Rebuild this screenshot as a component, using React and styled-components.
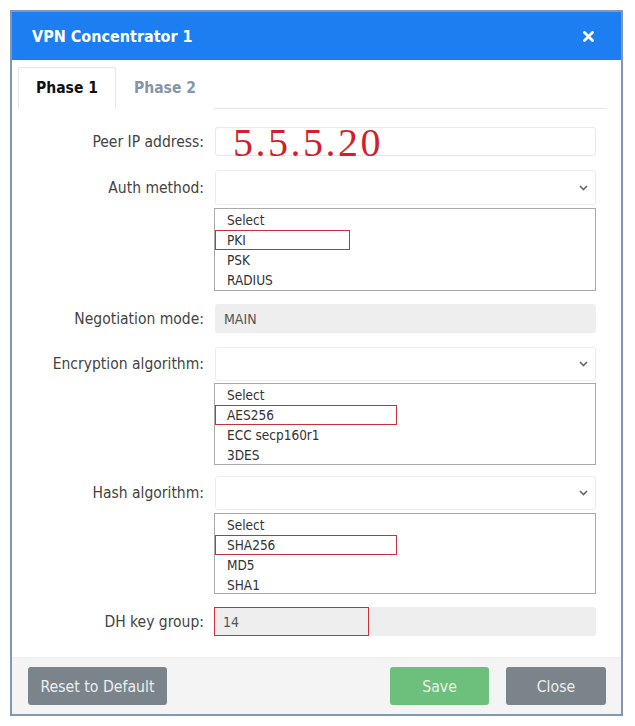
import React from 'react';
import styled, { createGlobalStyle } from 'styled-components';

const GlobalStyle = createGlobalStyle`
  html, body {
    margin: 0;
    padding: 0;
    background: #ffffff;
  }
  body {
    font-family: 'DejaVu Sans Condensed', 'DejaVu Sans', sans-serif;
    font-stretch: condensed;
  }
`;

const Page = styled.div`
  padding: 10px 0 0 10px;
`;

const Dialog = styled.div`
  width: 609px;
  border: 2px solid #7f99b5;
  background: #ffffff;
  display: flex;
  flex-direction: column;
`;

const Header = styled.div`
  height: 48px;
  background: #1c7ef0;
  display: flex;
  align-items: center;
  justify-content: space-between;
  padding: 0 27px 0 20px;
  color: #ffffff;
  font-size: 16px;
  font-weight: bold;
`;

const CloseIcon = () => (
  <svg width='11' height='11' viewBox='0 0 11 11'>
    <path d='M1.5 1.5 L9.5 9.5 M9.5 1.5 L1.5 9.5' stroke='#ffffff' strokeWidth='2.8' strokeLinecap='round' />
  </svg>
);

const TabBar = styled.div`
  display: flex;
  margin: 7px 14px 0 6px;
  border-bottom: 1px solid #e6e6e6;
`;

const Tab = styled.div`
  width: 96px;
  height: 40px;
  display: flex;
  align-items: center;
  justify-content: center;
  font-size: 15.5px;
  font-weight: bold;
  color: ${(p) => (p.$active ? '#111111' : '#8794a8')};
  border: 1px solid ${(p) => (p.$active ? '#e6e6e6' : 'transparent')};
  border-bottom: none;
  margin-bottom: -1px;
  background: #ffffff;
  border-radius: 3px 3px 0 0;
  padding-bottom: 1px;
`;

const Form = styled.div`
  padding: 0 25px 21px 0;
`;

const Row = styled.div`
  display: grid;
  grid-template-columns: 192px 381px;
  column-gap: 11px;
  align-items: center;
  margin-top: ${(p) => p.$gap}px;
`;

const Label = styled.div`
  text-align: right;
  font-size: 15.5px;
  color: #444444;
`;

const TextBox = styled.div`
  height: 27px;
  border: 1px solid #e8e8e8;
  border-radius: 3px;
  display: flex;
  align-items: center;
  padding-left: 17px;
`;

const HandValue = styled.span`
  font-family: 'Liberation Serif', serif;
  font-stretch: normal;
  font-size: 40px;
  letter-spacing: 2.5px;
  line-height: 1;
  color: #d11f2b;
  margin-top: 2px;
`;

const SelectBox = styled.div`
  height: ${(p) => p.$h}px;
  border: 1px solid #ececec;
  border-radius: 3px;
  display: flex;
  align-items: center;
  justify-content: flex-end;
  padding-right: 7px;
`;

const Chevron = () => (
  <svg width='9' height='6' viewBox='0 0 9 6'>
    <path d='M1 1 L4.5 4.5 L8 1' fill='none' stroke='#666666' strokeWidth='1.6' />
  </svg>
);

const ListBox = styled.div`
  height: ${(p) => p.$h}px;
  border: 1px solid #a9a9a9;
  background: #ffffff;
  padding-top: 1px;
  box-sizing: border-box;
  margin-left: -1px;
`;

const Option = styled.div`
  height: 20px;
  line-height: 20px;
  padding-left: 12px;
  font-size: 13.5px;
  color: #333333;
  width: ${(p) => (p.$mark ? `${p.$mark}px` : 'auto')};
  box-sizing: border-box;
  outline: ${(p) => (p.$mark ? '1.5px solid #c9303b' : 'none')};
  outline-offset: -1px;
`;

const ReadOnlyBox = styled.div`
  height: 29px;
  background: #eeeeee;
  border-radius: 3px;
  display: flex;
`;

const ReadOnlyValue = styled.div`
  display: flex;
  align-items: center;
  padding-left: 9px;
  font-size: 14px;
  color: #555555;
  box-sizing: border-box;
  width: ${(p) => (p.$mark ? `${p.$mark}px` : 'auto')};
  margin-left: ${(p) => (p.$mark ? '-1px' : '0')};
  outline: ${(p) => (p.$mark ? '1.5px solid #c9303b' : 'none')};
  outline-offset: -1px;
`;

const Footer = styled.div`
  height: 56px;
  background: #f4f4f4;
  border-top: 1px solid #ececec;
  display: flex;
  align-items: center;
  padding: 0 15px 0 16px;
  gap: 17px;
`;

const Button = styled.button`
  height: 38px;
  width: ${(p) => p.$w}px;
  border: none;
  border-radius: 3px;
  background: ${(p) => p.$bg};
  color: #eceeee;
  font-family: inherit;
  font-stretch: condensed;
  font-size: 15.7px;
  padding: 0;
  margin-left: ${(p) => (p.$push ? 'auto' : '0')};
`;

const ListRow = ({ gap, h, items }) => (
  <Row $gap={gap}>
    <div />
    <ListBox $h={h}>
      {items.map((it) => (
        <Option key={it.text} $mark={it.mark}>
          {it.text}
        </Option>
      ))}
    </ListBox>
  </Row>
);

export default function App() {
  return (
    <Page>
      <GlobalStyle />
      <Dialog>
        <Header>
          <span>VPN Concentrator 1</span>
          <CloseIcon />
        </Header>
        <TabBar>
          <Tab $active>Phase 1</Tab>
          <Tab>Phase 2</Tab>
        </TabBar>
        <Form>
          <Row $gap={18}>
            <Label>Peer IP address:</Label>
            <TextBox>
              <HandValue>5.5.5.20</HandValue>
            </TextBox>
          </Row>
          <Row $gap={14}>
            <Label>Auth method:</Label>
            <SelectBox $h={33}>
              <Chevron />
            </SelectBox>
          </Row>
          <ListRow
            gap={3}
            h={83}
            items={[
              { text: 'Select' },
              { text: 'PKI', mark: 135 },
              { text: 'PSK' },
              { text: 'RADIUS' },
            ]}
          />
          <Row $gap={13}>
            <Label>Negotiation mode:</Label>
            <ReadOnlyBox>
              <ReadOnlyValue>MAIN</ReadOnlyValue>
            </ReadOnlyBox>
          </Row>
          <Row $gap={14}>
            <Label>Encryption algorithm:</Label>
            <SelectBox $h={32}>
              <Chevron />
            </SelectBox>
          </Row>
          <ListRow
            gap={2}
            h={82}
            items={[
              { text: 'Select' },
              { text: 'AES256', mark: 182 },
              { text: 'ECC secp160r1' },
              { text: '3DES' },
            ]}
          />
          <Row $gap={11}>
            <Label>Hash algorithm:</Label>
            <SelectBox $h={32}>
              <Chevron />
            </SelectBox>
          </Row>
          <ListRow
            gap={3}
            h={81}
            items={[
              { text: 'Select' },
              { text: 'SHA256', mark: 182 },
              { text: 'MD5' },
              { text: 'SHA1' },
            ]}
          />
          <Row $gap={13}>
            <Label>DH key group:</Label>
            <ReadOnlyBox>
              <ReadOnlyValue $mark={155}>14</ReadOnlyValue>
            </ReadOnlyBox>
          </Row>
        </Form>
        <Footer>
          <Button $w={139} $bg='#7b848b'>
            Reset to Default
          </Button>
          <Button $w={99} $bg='#6cc07b' $push>
            Save
          </Button>
          <Button $w={100} $bg='#7b848b'>
            Close
          </Button>
        </Footer>
      </Dialog>
    </Page>
  );
}
